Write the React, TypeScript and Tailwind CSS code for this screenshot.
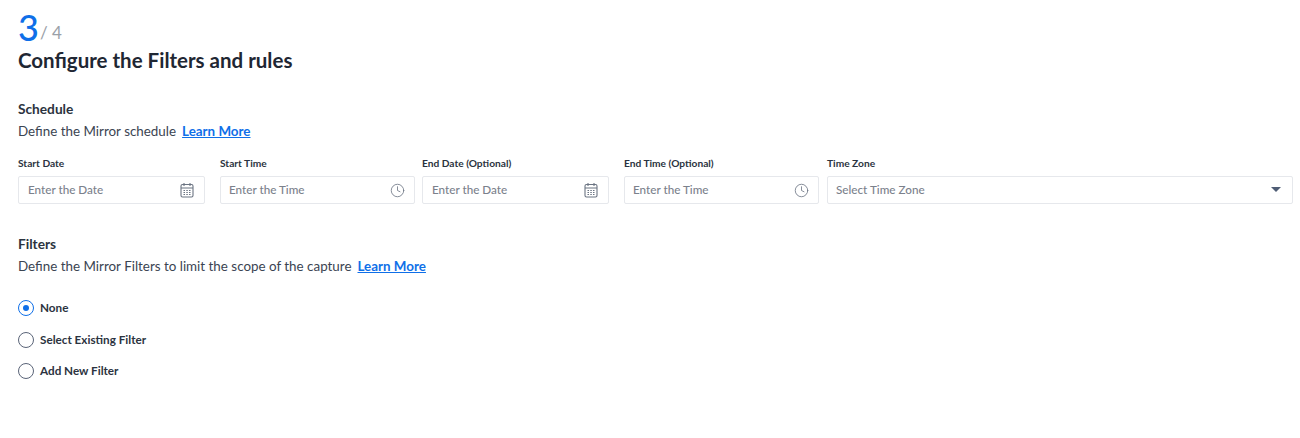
import { Clock } from 'lucide-react'

const font = "font-['Lato','Noto_Sans',sans-serif]"

function CalendarIcon() {
  return (
    <svg width="14" height="16" viewBox="0 0 14 16" fill="none" className="text-[#6b7482]" stroke="currentColor" strokeWidth="1.1">
      <rect x="1" y="2.5" width="12" height="12.5" rx="1.5" />
      <path d="M1 6h12M4 1v3M10 1v3" />
      <path d="M3.5 8.5h1.5M6.3 8.5h1.5M9 8.5h1.5M3.5 10.5h1.5M6.3 10.5h1.5M9 10.5h1.5M3.5 12.5h1.5M6.3 12.5h1.5M9 12.5h1.5" strokeWidth="1.2" />
    </svg>
  )
}

function DateField({ label, placeholder, icon, width, gapRight }: { label: string; placeholder: string; icon: 'date' | 'time'; width: string; gapRight: string }) {
  return (
    <div className={`${width} ${gapRight} shrink-0`}>
      <div className="h-[20px] text-[10.2px] font-bold leading-[14px] text-[#2b3340]">{label}</div>
      <div className={`flex h-[28px] items-center justify-between rounded-[2px] border border-[#e6e8ec] ${icon === 'date' ? 'pl-[9px] pr-[10px]' : 'pl-[8px] pr-[9px]'}`}>
        <span className="text-[11.7px] font-medium text-[#7b818c]">{placeholder}</span>
        {icon === 'date' ? (
          <CalendarIcon />
        ) : (
          <Clock size={15} strokeWidth={1.3} className="text-[#6b7482]" />
        )}
      </div>
    </div>
  )
}

function Radio({ label, checked }: { label: string; checked?: boolean }) {
  return (
    <div className="flex h-[16px] items-center gap-[6px]">
      <div className={`flex h-[16px] w-[16px] items-center justify-center rounded-full border-[1.5px] ${checked ? 'border-[#0f6fe8]' : 'border-[#5a6478]'}`}>
        {checked && <div className="h-[6px] w-[6px] rounded-full bg-[#0f6fe8]" />}
      </div>
      <span className="text-[11.7px] font-bold text-[#2b3340]">{label}</span>
    </div>
  )
}

export default function App() {
  return (
    <div className={`${font} h-[438px] w-[1300px] overflow-hidden bg-white pl-[18px] pr-[7px] pt-[10px]`}>
      <div className="flex h-[35px] items-end">
        <span className="text-[36px] font-medium leading-[35px] text-[#0f6fe8]">3</span>
        <span className="mb-[1px] ml-[1px] text-[17px] leading-[22px] text-[#9aa0a8]">/ 4</span>
      </div>
      <h1 className="mt-[2px] text-[20.5px] font-bold leading-[26px] text-[#1f2733]">Configure the Filters and rules</h1>

      <h2 className="mt-[27px] text-[13.7px] font-bold leading-[18px] text-[#2b3340]">Schedule</h2>
      <p className="mt-[4px] text-[13.4px] leading-[18px] text-[#3b4452]">
        Define the Mirror schedule
        <a href="#" className="ml-[6px] font-bold text-[#0f6fe8] underline">Learn More</a>
      </p>

      <div className="mt-[16px] flex">
        <DateField label="Start Date" placeholder="Enter the Date" icon="date" width="w-[187px]" gapRight="mr-[15px]" />
        <DateField label="Start Time" placeholder="Enter the Time" icon="time" width="w-[195px]" gapRight="mr-[7px]" />
        <DateField label="End Date (Optional)" placeholder="Enter the Date" icon="date" width="w-[187px]" gapRight="mr-[15px]" />
        <DateField label="End Time (Optional)" placeholder="Enter the Time" icon="time" width="w-[195px]" gapRight="mr-[8px]" />
        <div className="flex-1">
          <div className="h-[20px] text-[10.2px] font-bold leading-[14px] text-[#2b3340]">Time Zone</div>
          <div className="flex h-[28px] items-center justify-between rounded-[2px] border border-[#e6e8ec] pl-[8px] pr-[11px]">
            <span className="text-[11.7px] font-medium text-[#7b818c]">Select Time Zone</span>
            <div className="mb-[1px] h-0 w-0 border-x-[5px] border-t-[5px] border-x-transparent border-t-[#4f5d75]" />
          </div>
        </div>
      </div>

      <h2 className="mt-[31px] text-[13.7px] font-bold leading-[18px] text-[#2b3340]">Filters</h2>
      <p className="mt-[4px] text-[13.4px] leading-[18px] text-[#3b4452]">
        Define the Mirror Filters to limit the scope of the capture
        <a href="#" className="ml-[6px] font-bold text-[#0f6fe8] underline">Learn More</a>
      </p>

      <div className="mt-[25px] flex flex-col gap-[15.5px]">
        <Radio label="None" checked />
        <Radio label="Select Existing Filter" />
        <Radio label="Add New Filter" />
      </div>
    </div>
  )
}
